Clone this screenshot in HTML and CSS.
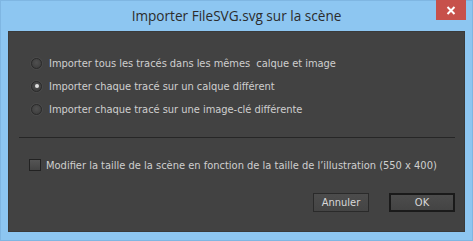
FILE: index.html
```html
<!DOCTYPE html>
<html>
<head>
<meta charset="utf-8">
<link rel="stylesheet" href="styles.css">
</head>
<body>
<div class="window">
  <div class="titlebar">
    <div class="title">Importer FileSVG.svg sur la scène</div>
    <div class="close"><svg width="10" height="9" viewBox="0 0 10 9"><path d="M1.5 1 L8.5 8 M8.5 1 L1.5 8" stroke="#fff" stroke-width="2"/></svg></div>
  </div>
  <div class="panel">
    <div class="options">
      <label class="opt"><span class="radio"></span><span>Importer tous les tracés dans les mêmes&nbsp; calque et image</span></label>
      <label class="opt"><span class="radio on"></span><span>Importer chaque tracé sur un calque différent</span></label>
      <label class="opt"><span class="radio"></span><span>Importer chaque tracé sur une image-clé différente</span></label>
    </div>
    <div class="sep"></div>
    <label class="check"><span class="box"></span><span>Modifier la taille de la scène en fonction de la taille de l’illustration (550 x 400)</span></label>
    <div class="buttons">
      <div class="btn">Annuler</div>
      <div class="btn ok">OK</div>
    </div>
  </div>
</div>
</body>
</html>
```
FILE: styles.css
```css
html, body { margin: 0; padding: 0; }
body { width: 473px; height: 241px; overflow: hidden; }
.window {
  width: 473px; height: 241px; box-sizing: border-box;
  background: #8dc6f1;
  border: 1px solid #7fb6e2;
  display: flex; flex-direction: column;
}
.titlebar {
  height: 30px; position: relative;
  display: flex; align-items: center; justify-content: center;
}
.title {
  font-family: "Open Sans", sans-serif; font-size: 13.6px; color: #2c2c2c;
  margin-top: -1px;
}
.close {
  position: absolute; right: 6px; top: -1px; width: 30px; height: 20px;
  background: #c7514b; display: flex; align-items: center; justify-content: center;
}
.panel {
  margin: 0 7px; height: 201px; background: #424242;
  font-family: "DejaVu Sans Condensed", "DejaVu Sans", sans-serif; font-size: 11px; color: #cfcfcf;
  display: flex; flex-direction: column;
  border: 1px solid #3a3a3a; box-sizing: border-box;
}
.options { display: flex; flex-direction: column; gap: 9px; padding: 24px 0 0 22px; }
.opt { display: flex; align-items: center; gap: 7px; height: 14px; letter-spacing: -0.03px; }
.radio {
  width: 11px; height: 11px; border-radius: 50%; box-sizing: border-box;
  border: 1px solid #2b2b2b; background: radial-gradient(circle at 50% 40%, #505050, #3a3a3a);
  box-shadow: 0 0 0 1px #4a4a4a;
  display: flex; align-items: center; justify-content: center;
}
.radio.on::after { content: ""; width: 4px; height: 4px; border-radius: 50%; background: #e0e0e0; }
.sep { height: 1px; background: #262626; margin: 21px 9px 0 10px; }
.check { display: flex; align-items: center; gap: 5px; padding: 20px 0 0 20px; height: 14px; }
.box {
  width: 12px; height: 12px; box-sizing: border-box; border: 1px solid #222;
  background: linear-gradient(#555, #444);
}
.buttons { display: flex; justify-content: flex-end; gap: 20px; padding: 21px 9px 0 0; }
.btn {
  width: 56px; height: 19px; box-sizing: border-box;
  border: 1px solid #2a2a2a; background: linear-gradient(#4c4c4c, #444);
  display: flex; align-items: center; justify-content: center; color: #d8d8d8;
}
.btn.ok { width: 66px; border: 2px solid #1a1a1a; }
```
